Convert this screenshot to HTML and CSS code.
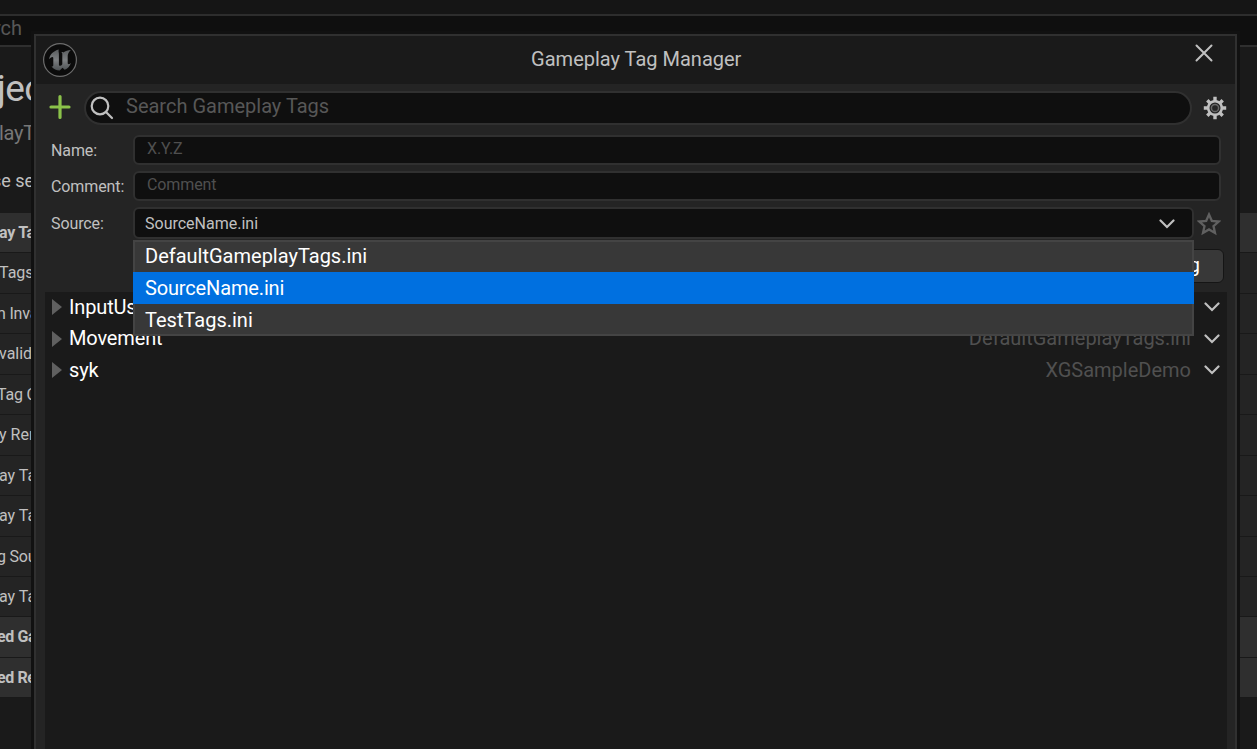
FILE: index.html
```html
<!DOCTYPE html>
<html lang="en">
<head>
<meta charset="utf-8">
<title>Gameplay Tag Manager</title>
<link rel="stylesheet" href="styles.css">
</head>
<body>
<div class="settings">
  <div class="settings-tabs"></div>
  <div class="settings-search"><span>rch</span></div>
  <div class="settings-head">
    <div class="heading">jec</div>
    <div class="subheading">layT</div>
    <div class="notice">se se</div>
  </div>
  <div class="prop group"><span>ay Ta</span></div>
  <div class="prop"><span>Tags</span></div>
  <div class="prop"><span class="tight">n Inva</span></div>
  <div class="prop"><span>valid</span></div>
  <div class="prop"><span class="tight">Tag C</span></div>
  <div class="prop"><span>y Ren</span></div>
  <div class="prop"><span>ay Ta</span></div>
  <div class="prop"><span>ay Ta</span></div>
  <div class="prop"><span class="tight">g Sou</span></div>
  <div class="prop"><span>ay Ta</span></div>
  <div class="prop group"><span class="tight">ed Ga</span></div>
  <div class="prop group"><span class="tight">ed Re</span></div>
</div>

<div class="window">
  <div class="titlebar">
    <svg class="logo" viewBox="0 0 36 36">
      <defs><linearGradient id="metal" x1="0" y1="0" x2="0" y2="1"><stop offset="0" stop-color="#5a5d5f"/><stop offset=".5" stop-color="#7d8082"/><stop offset="1" stop-color="#4c5053"/></linearGradient></defs>
      <circle cx="18" cy="18" r="16.400" fill="#0b0b0b" stroke="#6c6c6c" stroke-width="1.200"/>
      <path fill="url(#metal)" d="M16.800 7.600C11.500 9 7.800 12.400 7.200 17.200c1.300-1.500 2.500-2.200 3.300-2.100.7.100.8.6.8 1.400v6.400c0 1.200-.6 1.700-1.800 1.600 2 2.600 5 3.900 8.200 4l2.800-2.700 2.200 1.900c3-1.200 5.100-3.500 6.200-6.800-1.200 1-2 1.400-2.600 1.200-.5-.2-.6-.6-.6-1.200V13.800c0-2.200 1.400-4.300 3.200-5.900-3 .2-5.400 1-7.600 2.500-.5-.4-1.200-.4-1.900-.2.700.5.9 1.100.9 1.900v10.200c-.7 1-1.400 1.500-2.100 1.500-1 0-1.300-.7-1.300-1.600V12.100c0-2.100-.7-2.600-.1-4.500z"/>
    </svg>
    <h1>Gameplay Tag Manager</h1>
    <svg class="close" viewBox="0 0 20 20"><path d="M2.500 2.500l15 15M17.500 2.500l-15 15"/></svg>
  </div>

  <div class="toolbar">
    <svg class="plus" viewBox="0 0 24 26"><path d="M12 2.500v21M3 13h18"/></svg>
    <div class="search">
      <svg viewBox="0 0 24 24"><circle cx="10" cy="10" r="8.300"/><path d="M16 16l6 6"/></svg>
      <span>Search Gameplay Tags</span>
    </div>
    <svg class="gear" viewBox="0 0 24 24">
      <circle class="body" cx="12" cy="12" r="6.800"/>
      <path d="M12 5V.800M12 19v4.200M5 12H.800M19 12h4.200M7 7L4.300 4.300M17 7l2.700-2.700M7 17l-2.700 2.700M17 17l2.700 2.700"/>
      <circle class="hub" cx="12" cy="12" r="3.600"/>
    </svg>
  </div>

  <div class="form">
    <label>Name:</label><div class="field"><span>X.Y.Z</span></div>
    <label>Comment:</label><div class="field"><span>Comment</span></div>
    <label>Source:</label>
    <div class="source">
      <div class="combo"><span>SourceName.ini</span><svg class="chevron" viewBox="0 0 16 10"><path d="M1.500 1.500L8 8l6.500-6.500"/></svg>
        <div class="menu">
          <div class="option">DefaultGameplayTags.ini</div>
          <div class="option selected">SourceName.ini</div>
          <div class="option">TestTags.ini</div>
        </div>
      </div>
      <svg class="star" viewBox="0 0 24 24"><path d="M12 2.500l2.800 6.300 6.900.700-5.200 4.600 1.500 6.800-6-3.500-6 3.500 1.500-6.800-5.200-4.600 6.900-.700z"/></svg>
    </div>
  </div>

  <div class="actions"><div class="button">Add New Tag</div></div>

  <div class="tree">
    <div class="node"><svg class="arrow" viewBox="0 0 10 16"><path d="M0 0l10 8-10 8z"/></svg><b>InputUs</b><svg class="chevron" viewBox="0 0 16 10"><path d="M1.500 1.500L8 8l6.500-6.500"/></svg></div>
    <div class="node"><svg class="arrow" viewBox="0 0 10 16"><path d="M0 0l10 8-10 8z"/></svg><b>Movement</b><i>DefaultGameplayTags.ini</i><svg class="chevron" viewBox="0 0 16 10"><path d="M1.500 1.500L8 8l6.500-6.500"/></svg></div>
    <div class="node"><svg class="arrow" viewBox="0 0 10 16"><path d="M0 0l10 8-10 8z"/></svg><b>syk</b><i>XGSampleDemo</i><svg class="chevron" viewBox="0 0 16 10"><path d="M1.500 1.500L8 8l6.500-6.500"/></svg></div>
  </div>
</div>
</body>
</html>
```

FILE: styles.css
```css
* { box-sizing: border-box; }
body { margin: 0; width: 1257px; height: 749px; overflow: hidden; position: relative; background: #1a1a1a; color: #c0c0c0; font-family: Roboto, "Liberation Sans", sans-serif; font-size: 16px; white-space: nowrap; }
svg { display: block; flex: none; fill: none; stroke-linecap: round; }

.settings { height: 749px; }
.settings-tabs { height: 16px; background: #151515; border-bottom: 2px solid #2d2d2d; }
.settings-search { height: 31px; background: #0f0f0f; border-bottom: 2px solid #2f2f2f; font-size: 20px; line-height: 24px; color: #575757; }
.settings-search span { margin-left: -6px; }
.settings-head { height: 166px; padding-top: 18px; overflow: hidden; width: 31px; }
.heading { font-size: 37px; line-height: 48px; margin-left: -3px; letter-spacing: -.6px; }
.subheading { font-size: 20px; line-height: 24px; margin: 8px 0 0 -1px; color: #777; letter-spacing: -.3px; }
.notice { font-size: 18px; line-height: 24px; margin: 24px 0 0 -8px; }
.prop { height: 40.45px; border-bottom: 1.5px solid #191919; background: #242424; line-height: 40px; }
.prop span { margin-left: -1px; }
.prop .tight { margin-left: -3px; letter-spacing: -.2px; }
.group { background: #2f2f2f; font-weight: 700; letter-spacing: -.3px; }
.prop.group .tight { letter-spacing: -.4px; }

.window { position: absolute; left: 34px; top: 34px; width: 1203px; height: 715px; background: #242424; border: 2px solid #303030; border-bottom: 0; box-shadow: 0 0 0 3px #111; }
.titlebar { height: 48px; background: #1a1a1a; display: flex; align-items: center; justify-content: space-between; padding: 0 20.5px 0 6px; }
.logo { width: 36px; height: 36px; }
.titlebar h1 { margin: 0; font-size: 20px; font-weight: 400; line-height: 24px; padding-bottom: 2px; }
.close { width: 20px; height: 20px; margin-bottom: 14px; stroke: #c0c0c0; stroke-width: 2; }

.toolbar { display: flex; align-items: center; height: 48px; padding-left: 12px; }
.plus { width: 24px; height: 26px; margin-bottom: 2px; stroke: #8bc24a; stroke-width: 3.2; }
.search { width: 1108px; height: 34px; margin-left: 12px; border: 2px solid #303030; border-radius: 17px; background: #0f0f0f; display: flex; align-items: center; padding-left: 4px; gap: 12px; font-size: 20px; color: #575757; }
.search svg { width: 24px; height: 24px; stroke: #c0c0c0; stroke-width: 2.2; }
.search span { padding-bottom: 4px; }
.gear { width: 24px; height: 24px; margin-left: 11px; }
.gear path { stroke: #c0c0c0; stroke-width: 3.4; stroke-linecap: butt; }
.gear .body { stroke: #c0c0c0; stroke-width: 2.6; }
.gear .hub { stroke: #686868; stroke-width: 1.5; }

.form { display: grid; grid-template-columns: 82px 1088px; grid-template-rows: 30px 30px 32px; row-gap: 6px; padding: 3px 0 0 15px; align-items: center; }
.form label { letter-spacing: -.1px; }
.field { height: 30px; border: 2px solid #303030; border-radius: 6px; background: #0f0f0f; color: #4f4f4f; padding: 0 12px; line-height: 23px; letter-spacing: -.1px; }
.source { display: flex; align-items: center; gap: 3px; }
.combo { position: relative; width: 1061px; height: 32px; border: 2px solid #303030; border-radius: 6px; background: #0f0f0f; display: flex; align-items: center; justify-content: space-between; padding: 0 17px 0 10px; }
.combo > .chevron { margin-top: 2px; }
.chevron { width: 16px; height: 10px; stroke: #c0c0c0; stroke-width: 2.2; }
.star { width: 24px; height: 24px; margin-top: 2px; stroke: #606060; stroke-width: 2.3; }
.menu { position: absolute; z-index: 2; left: -2px; top: 31px; width: 1061px; height: 96px; background: #383838; box-shadow: inset 0 0 0 2px #444; }
.option { height: 32px; line-height: 32px; padding-left: 12px; font-size: 20px; color: #fff; }
.selected { background: #0070e0; letter-spacing: -.15px; }

.actions { display: flex; justify-content: flex-end; padding: 10px 11px 9px 0; }
.button { height: 34px; line-height: 30px; padding: 0 23px; border: 1px solid #151515; border-radius: 6px; background: #383838; color: #fff; font-size: 20px; }
.tree { margin: 0 8px 0 9px; height: 457px; background: #1a1a1a; }
.node { height: 31.5px; display: flex; align-items: center; padding: 0 7px; font-size: 20px; line-height: 24px; }
.node b, .node i { padding-bottom: 2px; }
.node b { font-weight: 400; color: #fff; margin-left: 7px; letter-spacing: -.15px; }
.node i { font-style: normal; color: #505050; margin-left: auto; }
.node svg { margin-bottom: 1px; }
.node .chevron { margin-left: auto; }
.node i + .chevron { margin-left: 13px; }
.arrow { width: 10px; height: 16px; fill: #606060; }
```
